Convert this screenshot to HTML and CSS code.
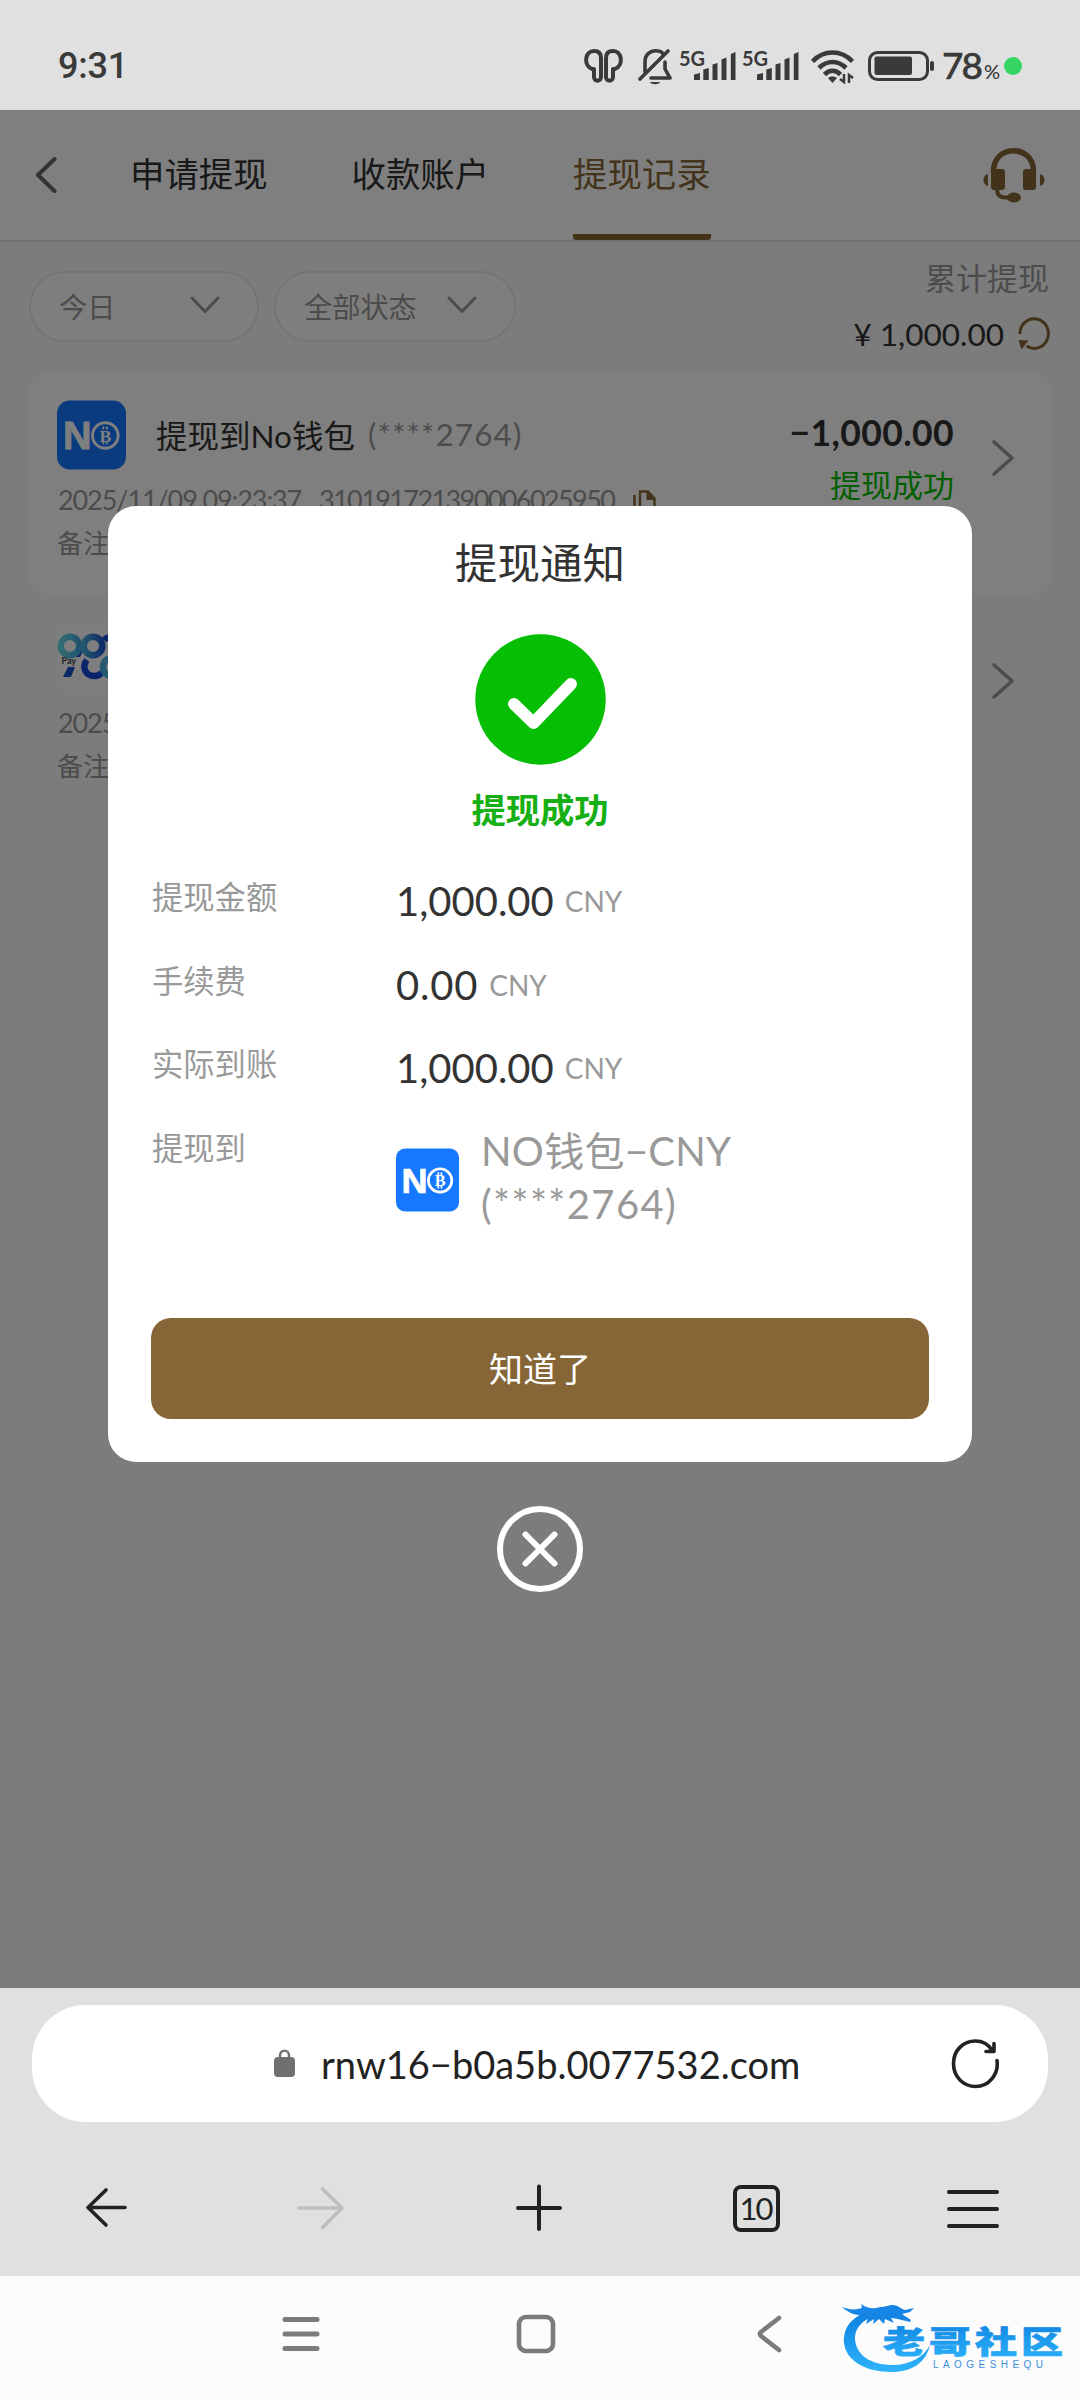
FILE: index.html
```html
<!DOCTYPE html>
<html lang="zh-CN">
<head>
<meta charset="utf-8">
<title>提现记录</title>
<link rel="stylesheet" href="styles.css">
</head>
<body>
<svg class="defs" width="0" height="0">
  <symbol id="next" viewBox="0 0 24 38"><path d="M3 3 21 19 3 35" fill="none" stroke="#999" stroke-width="3.600" stroke-linecap="round" stroke-linejoin="round"/></symbol>
  <symbol id="down" viewBox="0 0 30 18"><path d="M2 2 15 15.500 28 2" fill="none" stroke="#999" stroke-width="3" stroke-linecap="round" stroke-linejoin="round"/></symbol>
  <symbol id="signal" viewBox="0 0 42 28"><path d="M0 22.500l6-1.500v7H0zM9.300 17.500l5.500-1.500v12H9.300zM18.500 12.500l5-1.500v17h-5zM27.500 7.500l5-2v22.500h-5zM36.800 2l4.700-2v28h-4.700z" fill="#3a3a3a"/></symbol>
</svg>

<header class="status">
  <span class="clock">9:31</span>
  <div class="status-icons">
    <svg class="i-buds" width="39" height="34" viewBox="0 0 39 34" fill="none" stroke="#3a3a3a" stroke-width="4" stroke-linejoin="round"><path d="M8 20C-1 16 1 2 10 2c5 0 7 3 7 7v19c0 5-7 5-7 0v-8zM31 20C40 16 38 2 29 2c-5 0-7 3-7 7v19c0 5 7 5 7 0v-8z"/></svg>
    <svg class="i-bell" width="34" height="37" viewBox="0 0 34 37" fill="none" stroke="#3a3a3a" stroke-width="3.600" stroke-linecap="round" stroke-linejoin="round"><path d="M2 31 30 3M7 24V14C7 5 14 2 20 3c2 0 4 1 5 3M27 14v7l5 9H13"/><path d="M12 34h10c-1 3-9 3-10 0z" fill="#3a3a3a" stroke="none"/></svg>
    <span class="net">5G</span><svg class="i-sig" width="42" height="28"><use href="#signal"/></svg>
    <span class="net net2">5G</span><svg class="i-sig" width="42" height="28"><use href="#signal"/></svg>
    <svg class="i-wifi" width="43" height="34" viewBox="0 0 43 34" fill="none" stroke="#3a3a3a" stroke-width="4.600"><path d="M1.500 11.500c11-12 29-12 40 0M8 18c8-8 19-8 27 0M13.500 24.500c5-5 11-5 16 0"/><path d="M17 28c2-2 7-2 9 0l-4.500 5z" fill="#3a3a3a" stroke="none"/><path d="M33 24v8l-4-3M38 33v-8l4 3" stroke-width="2.500"/></svg>
    <svg class="i-batt" width="66" height="30" viewBox="0 0 66 30"><rect x="1.500" y="1.500" width="58" height="27" rx="8" fill="none" stroke="#3a3a3a" stroke-width="3"/><rect x="6.500" y="5.500" width="37.500" height="18.500" rx="2" fill="#3a3a3a"/><rect x="62" y="10" width="4" height="10" rx="2" fill="#3a3a3a"/></svg>
    <span class="pct">78<small>%</small></span>
    <i class="dot"></i>
  </div>
</header>

<main class="page">
  <nav class="tabs">
    <svg class="back" width="22" height="36" viewBox="0 0 22 36"><path d="M19.500 2 3 18 19.500 34" fill="none" stroke="#666" stroke-width="4" stroke-linecap="round" stroke-linejoin="round"/></svg>
    <span class="tab">申请提现</span>
    <span class="tab">收款账户</span>
    <span class="tab active">提现记录</span>
    <svg class="headset" width="62" height="55" viewBox="0 0 62 55"><g fill="#866637"><path d="M5 26v12c-6-1-6-11 0-12zM57 26v12c6-1 6-11 0-12z"/><rect x="8" y="21" width="14" height="21" rx="3"/><rect x="40" y="21" width="13" height="21" rx="3"/><ellipse cx="31" cy="49.500" rx="7" ry="5"/></g><path d="M10.500 24v-1c0-27 40-27 40 0v1" fill="none" stroke="#866637" stroke-width="5.500"/><path d="M14 41c0 6 3 8.500 8 8.500h5" fill="none" stroke="#866637" stroke-width="4"/></svg>
  </nav>

  <section class="filters">
    <div class="pill pill-day"><span>今日</span><svg width="30" height="18"><use href="#down"/></svg></div>
    <div class="pill pill-state"><span>全部状态</span><svg width="30" height="18"><use href="#down"/></svg></div>
    <div class="total">
      <div class="total-label">累计提现</div>
      <div class="total-sum"><span>¥ 1,000.00</span><svg width="32" height="33" viewBox="0 0 32 33"><path d="M2 17A14.200 14.800 0 1 1 8.500 29" fill="none" stroke="#866637" stroke-width="3"/><path d="M.5 23l10 .5-7 9z" fill="#866637"/></svg></div>
    </div>
  </section>

  <article class="record card">
    <div class="info">
      <div class="head"><svg class="logo" width="69" height="70" viewBox="0 0 70 70">
        <rect width="70" height="70" rx="13" fill="#1677ff"/>
        <text x="6" y="49" class="no-n" textLength="29" lengthAdjust="spacingAndGlyphs">N</text>
        <circle cx="49" cy="35.500" r="13" fill="none" stroke="#fff" stroke-width="3"/>
        <text x="43" y="42" class="no-b">B</text>
        <path d="M47 26.500v3M50.500 26.500v3M47 41.500v3M50.500 41.500v3" stroke="#fff" stroke-width="1.800"/>
      </svg><span class="name">提现到No钱包</span><span class="acct">(****2764)</span></div>
      <div class="meta"><span class="date">2025/11/09 09:23:37</span><span class="oid">310191721390006025950</span><svg width="23" height="32" viewBox="0 0 23 32"><path d="M1.500 5v25.500h14M7 1.500h8l6.500 7V26H7z" fill="none" stroke="#866637" stroke-width="2.400"/><path d="M13.500 1l8.500 9h-8.500z" fill="#866637"/></svg></div>
      <div class="note">备注</div>
    </div>
    <div class="result"><b>−1,000.00</b><span>提现成功</span></div>
    <svg class="next" width="24" height="38"><use href="#next"/></svg>
  </article>

  <article class="record">
    <div class="info">
      <div class="head"><svg class="logo" width="70" height="70" viewBox="0 0 70 70"><defs><linearGradient id="teal" x1="0" x2="1"><stop offset="0" stop-color="#6ad8e4"/><stop offset="1" stop-color="#3fa8e0"/></linearGradient><linearGradient id="mid" x1="0" x2="1"><stop offset="0" stop-color="#46b0e0"/><stop offset="1" stop-color="#2058d0"/></linearGradient></defs><rect width="70" height="70" rx="13" fill="#fcfcfc"/><path d="M14 34 24 24l2 4-3 6z" fill="#1550d0"/><g fill="none" stroke-width="6.500"><circle cx="13" cy="23" r="9.300" stroke="url(#teal)"/><circle cx="36" cy="23" r="9.300" stroke="url(#mid)"/><path d="M30 37c-6 7-1 16 7 16 4 0 7-2 8-4" stroke="#1448d8"/><circle cx="55" cy="44" r="9" stroke="#4ab4e4"/><path d="M47 17c5-5 13-3 14 4" stroke="#1550d0"/></g><text x="4.500" y="41" class="pay">Pay</text><path d="M11 44h7l-4 10H6z" fill="#1550d0"/></svg></div>
      <div class="meta"><span class="date">2025/11/08</span></div>
      <div class="note">备注</div>
    </div>
    <svg class="next" width="24" height="38"><use href="#next"/></svg>
  </article>

  <div class="mask">
    <section class="modal">
      <h1>提现通知</h1>
      <svg class="ok" width="131" height="131" viewBox="0 0 131 131"><circle cx="65.500" cy="65.500" r="65.200" fill="#06be04"/><path d="M39 70 58.500 89 96 50" fill="none" stroke="#fff" stroke-width="12" stroke-linecap="round" stroke-linejoin="round"/></svg>
      <strong class="done">提现成功</strong>
      <dl class="details">
        <dt>提现金额</dt><dd><span>1,000.00</span><small>CNY</small></dd>
        <dt>手续费</dt><dd><span class="fee">0.00</span><small>CNY</small></dd>
        <dt>实际到账</dt><dd><span>1,000.00</span><small>CNY</small></dd>
        <dt>提现到</dt><dd class="wallet"><svg width="63" height="64" viewBox="0 0 70 70">
          <rect width="70" height="70" rx="10" fill="#1677ff"/>
          <text x="6" y="49" class="no-n" textLength="29" lengthAdjust="spacingAndGlyphs">N</text>
          <circle cx="49" cy="35.500" r="13" fill="none" stroke="#fff" stroke-width="3"/>
          <text x="43" y="42" class="no-b">B</text>
          <path d="M47 26.500v3M50.500 26.500v3M47 41.500v3M50.500 41.500v3" stroke="#fff" stroke-width="1.800"/>
        </svg><p><span class="wname">NO钱包−CNY</span><br><span class="wacct">(****2764)</span></p></dd>
      </dl>
      <button class="confirm">知道了</button>
    </section>
    <svg class="close" width="86" height="86" viewBox="0 0 86 86" fill="none" stroke="#fff" stroke-linecap="round"><circle cx="43" cy="43" r="40" stroke-width="6"/><path d="M28.500 28.500l29 29M57.500 28.500l-29 29" stroke-width="6"/></svg>
  </div>
</main>

<footer class="browser">
  <div class="address">
    <svg class="lock" width="21" height="28" viewBox="0 0 21 28"><rect y="8" width="21" height="20" rx="4" fill="#707070"/><path d="M6 10V6.500c0-6.500 9-6.500 9 0V10" fill="none" stroke="#707070" stroke-width="2.400"/></svg>
    <span>rnw16−b0a5b.0077532.com</span>
    <svg class="reload" width="48" height="50" viewBox="0 0 48 50" fill="none" stroke="#222" stroke-width="3.600" stroke-linecap="round" stroke-linejoin="round"><path d="M46 21.500C48 35 38 47.500 24.500 47.500 12 47.500 2.500 37.500 2.500 24.500S12 2 24.500 2c7 0 12.500 3 16.500 9M43 4.500v8h-8"/></svg>
  </div>
  <div class="toolbar">
    <svg width="56" height="56" viewBox="0 0 56 56" fill="none" stroke="#222" stroke-width="3.600" stroke-linecap="round" stroke-linejoin="round"><path d="M49 27.500H12M30 10 12 27.500 30 45"/></svg>
    <svg width="56" height="56" viewBox="0 0 56 56" fill="none" stroke="#bebebe" stroke-width="3.600" stroke-linecap="round" stroke-linejoin="round"><path d="M6 28h43M29.500 9 49 28 29.500 47.500"/></svg>
    <svg width="56" height="56" viewBox="0 0 56 56" fill="none" stroke="#222" stroke-width="4" stroke-linecap="round"><path d="M7 28h42M28 6.500v42.500"/></svg>
    <span class="count">10</span>
    <svg width="56" height="56" viewBox="0 0 56 56" fill="none" stroke="#222" stroke-width="4" stroke-linecap="round"><path d="M4 12h48M4 29h48M4 46h48"/></svg>
  </div>
</footer>

<footer class="system">
  <svg width="38" height="40" viewBox="0 0 38 40" stroke="#7b7b7b" stroke-width="5" stroke-linecap="round"><path d="M3 5.500h32M3 20h32M3 34.500h32"/></svg>
  <svg width="40" height="40" viewBox="0 0 40 40"><rect x="3" y="3" width="34" height="34" rx="7" fill="none" stroke="#7b7b7b" stroke-width="4.600"/></svg>
  <svg width="26" height="40" viewBox="0 0 26 40"><path d="M23 4 5 18q-2 2 0 4L23 36" fill="none" stroke="#7b7b7b" stroke-width="4.600" stroke-linecap="round" stroke-linejoin="round"/></svg>
  <svg class="watermark" width="240" height="90" viewBox="0 0 240 90">
    <defs><linearGradient id="wm" x1="0" y1="0" x2="0" y2="1"><stop offset="0" stop-color="#0b7fe0"/><stop offset="1" stop-color="#2fb4fb"/></linearGradient></defs>
    <path d="M33 21C10 27 3 40 4 54c2 18 22 29 47 29 22 0 35-10 39-27-6 12-20 20-37 20-20 0-36-8-38-25C14 40 22 30 38 26z" fill="url(#wm)"/>
    <path d="M2 18c8 3 13 3 20 1l-1-4c7 5 13 5 19 3 6 0 8-2 13-2 5 0 8 4 12 5l9-2-4 4-8 2 9 6-1 2-12-3-7-1 3 5-9-4-1 5-5-5-6 5 1-5-8 5 2-6-6 2 4-6c-11 3-18-2-24-7z" fill="#1686e6"/>
    <text x="43" y="65" class="wm-cn" fill="url(#wm)" stroke="url(#wm)" textLength="180" lengthAdjust="spacing" transform="translate(0 16) scale(1 .74)">老哥社区</text>
    <text x="93" y="79" class="wm-en" textLength="110">LAOGESHEQU</text>
  </svg>
</footer>
</body>
</html>
```
FILE: styles.css
```css
* { box-sizing: border-box; }
body, h1, p, dl, dd { margin: 0; font-weight: 400; }
body {
  width: 1080px; height: 2400px; overflow: hidden;
  display: flex; flex-direction: column;
  font-family: Lato, "Noto Sans CJK SC", sans-serif;
  color: #333; background: #fcfcfc;
}
svg { display: block; flex: none; }
.defs { position: absolute; }
span, b, strong, small { white-space: nowrap; }
.no-n { font: 700 39px "Liberation Sans", sans-serif; fill: #fff; stroke: #fff; stroke-width: .8px; }
.no-b { font: 700 18px "Liberation Serif", serif; fill: #fff; }
.pay { font: 700 9px Lato, sans-serif; fill: #345; }

.status { height: 110px; flex: none; background: #e0e0e0; display: flex; padding: 0 56px 0 58px; justify-content: space-between; color: #3a3a3a; }
.clock { font: 500 36px/40px Roboto, sans-serif; letter-spacing: -.2px; padding-top: 46px; }
.status-icons { display: flex; align-items: flex-start; padding-top: 48px; margin-right: 2px; }
.i-buds { margin-top: 1px; }
.i-bell { margin-left: 15px; }
.net { font: 700 20px/20px Lato, sans-serif; margin: 0 -9px 0 7px; width: 24px; }
.net2 { margin-left: 6px; }
.i-sig { margin-top: 4px; }
.i-wifi { margin: 2px 0 0 12px; }
.i-batt { margin: 3px 0 0 14px; }
.pct { font: 500 37px/36px Lato, sans-serif; margin: -1px 0 0 8px; width: 57px; letter-spacing: -2px; -webkit-text-stroke: .5px #3a3a3a; }
.pct small { font-size: 20px; letter-spacing: 0; margin-left: 3px; -webkit-text-stroke: 0; }
.dot { width: 18px; height: 18px; border-radius: 50%; background: #34d563; margin: 9px 0 0 5px; }

.page { position: relative; height: 1878px; flex: none; background: #f8f8f8; }
.tabs { height: 132px; display: flex; align-items: center; background: #fff; border-bottom: 2px solid #e4e4e4; padding: 0 35px 0 35px; }
.tab { font-size: 34.400px; line-height: 48px; width: 138px; margin-left: 83.500px; display: flex; align-self: stretch; align-items: center; padding-bottom: 2px; }
.back + .tab { margin-left: 73px; }
.active { color: #866637; background: linear-gradient(#866637, #866637) bottom / 100% 6px no-repeat; border-radius: 0 0 3px 3px; }
.headset { margin-left: auto; }

.filters { height: 131px; display: flex; padding: 28.500px 30px 0 29px; }
.pill { height: 71px; border: 2px solid #e8e8e8; border-radius: 36px; background: #fdfdfd; display: flex; align-items: center; justify-content: space-between; font-size: 28.200px; color: #999; padding: 0 37px 2px 28px; }
.pill-day { width: 230px; }
.pill-state { width: 242px; margin-left: 15px; }
.total { margin-left: auto; text-align: right; margin-top: -15px; }
.total-label { font-size: 31px; line-height: 44px; color: #999; padding-right: 1px; }
.total-sum { display: flex; justify-content: flex-end; gap: 14px; align-items: center; font-size: 31.500px; line-height: 44px; margin-top: 12px; }

.record { height: 221px; margin: 0 29px 2px; padding: 27px 28px 0; display: flex; }
.card { background: #fff; border-radius: 18px; }
.info { width: 620px; }
.head { height: 70px; display: flex; align-items: center; }
.name { font-size: 31.500px; margin: -2px 0 0 30px; }
.acct { font-size: 31.500px; color: #999; margin: -2px 0 0 13px; letter-spacing: 1.100px; }
.meta { height: 38px; display: flex; align-items: center; margin-top: 11px; font-size: 27px; line-height: 38px; color: #999; }
.date { width: 261px; margin-left: 1px; letter-spacing: -1.100px; }
.oid { width: 299px; letter-spacing: -1.600px; }
.meta svg { margin: 11px 0 0 15px; }
.note { font-size: 26px; line-height: 36px; color: #999; margin-top: 6px; }
.result { margin-left: auto; width: 250px; margin-right: 37px; display: flex; flex-direction: column; align-items: flex-end; padding-top: 10px; }
.result b { font-size: 35.500px; line-height: 46px; font-weight: 700; letter-spacing: .4px; }
.result span { color: #04be02; font-size: 31px; line-height: 44px; margin-top: 7px; }
.next { margin: 39px 8px 0 0; }
.record:not(.card) .next { margin-left: auto; }

.mask { position: absolute; inset: 0; background: rgba(0,0,0,.5); display: flex; flex-direction: column; align-items: center; padding-top: 396px; }
.modal { width: 864px; height: 956px; background: #fff; border-radius: 28px; padding: 27px 43px 0; display: flex; flex-direction: column; align-items: center; }
h1 { font-size: 42.600px; line-height: 60px; }
.ok { margin-top: 41px; }
.done { font-size: 34.300px; line-height: 48px; color: #16b014; font-weight: 700; margin-top: 21px; }
.details { width: 778px; display: grid; grid-template-columns: 245px 1fr; grid-template-rows: 83.700px 83.700px 83.700px 160px; margin-top: 40px; }
dt { font-size: 31.300px; line-height: 44px; color: #999; margin-top: 1px; padding-left: 1px; }
dd { font-size: 40px; line-height: 54px; height: 54px; display: flex; align-items: center; }
dd small { font-size: 28px; color: #999; margin-left: 11px; }
.fee { letter-spacing: .8px; }
.wallet { align-items: flex-start; }
.wallet svg { margin-top: 23px; }
.wallet p { color: #999; line-height: 53px; margin: 0 0 0 22px; }
.wname { letter-spacing: .3px; }
.wacct { letter-spacing: 1.400px; }
.confirm { width: 778px; height: 101px; border: 0; border-radius: 20px; background: #866637; color: #fff; font: 34px/48px Lato, "Noto Sans CJK SC", sans-serif; margin-top: 33px; flex: none; }
.close { margin-top: 44px; flex: none; }

.browser { height: 288px; flex: none; background: #e0e0e0; padding: 17px 32px 0; }
.address { height: 117px; border-radius: 54px; background: #fff; display: flex; align-items: center; color: #222; font-size: 38px; padding: 0 49px 0 242px; }
.address span { margin-left: 26px; }
.lock { margin-top: -1px; }
.reload { margin-left: auto; }
.toolbar { display: flex; align-items: center; padding-left: 44px; height: 172px; }
.toolbar svg:nth-child(1) { margin-left: 0; }
.toolbar svg:nth-child(2) { margin-left: 161px; }
.toolbar svg:nth-child(3) { margin-left: 162px; }
.count { margin-left: 166px; width: 47px; height: 47px; border: 4px solid #222; border-radius: 8px; font-size: 31px; line-height: 39px; text-align: center; letter-spacing: -2px; padding-right: 2px; color: #222; }
.toolbar svg:last-child { margin-left: 165px; }

.system { position: relative; height: 124px; flex: none; display: flex; padding: 38px 0 0 282px; }
.system svg + svg { margin-left: 196px; }
.system svg:nth-child(3) { margin-left: 200px; }
.system .watermark { position: absolute; left: 840px; top: 13px; margin: 0; }
.wm-cn { font: 900 42px "Noto Sans CJK SC", sans-serif; stroke-width: 1px; }
.wm-en { font: 10px "Liberation Sans", sans-serif; fill: #3a8fdc; }
```
